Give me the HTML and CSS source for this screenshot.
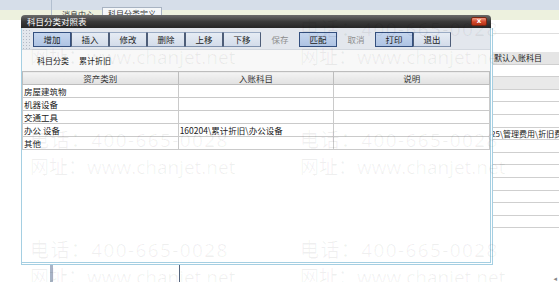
FILE: index.html
```html
<!DOCTYPE html>
<html lang="zh-CN">
<head>
  <meta charset="UTF-8" />
  <title>科目分类对照表</title>
  <link rel="stylesheet" href="styles.css">
</head>
<body>

<div class="app">
  <div class="app-head">
    <div class="head-left"></div>
    <div class="tabs">
      <span class="tab">消息中心</span>
      <span class="tab tab-on">科目分类定义</span>
    </div>
  </div>
  <div class="workspace">
    <div class="pane pane-a"></div>
    <div class="pane pane-b"></div>
    <div class="pane pane-c"></div>
    <div class="pane pane-d">
      <div class="d-top"></div>
      <div class="d-head">默认入账科目</div>
      <div class="d-row"></div>
      <div class="d-row sel"></div>
      <div class="d-row"></div>
      <div class="d-row"></div>
      <div class="d-row"></div>
      <div class="d-row">25\管理费用\折旧费</div>
      <div class="d-row"></div>
      <div class="d-row"></div>
      <div class="d-row"></div>
      <div class="d-row"></div>
      <div class="d-row"></div>
      <div class="d-row"></div>
      <div class="d-row"></div>
      <div class="d-arrow">◂</div>
    </div>
  </div>
</div>

<div class="dialog">
  <div class="dlg-title">
    <span>科目分类对照表</span>
    <span class="dlg-close">x</span>
  </div>
  <div class="dlg-body">
    <div class="toolbar">
      <span class="grip"></span>
      <button class="tb hl">增加</button>
      <button class="tb">插入</button>
      <button class="tb">修改</button>
      <button class="tb">删除</button>
      <button class="tb">上移</button>
      <button class="tb">下移</button>
      <button class="tb off">保存</button>
      <button class="tb hl">匹配</button>
      <button class="tb off">取消</button>
      <button class="tb hl">打印</button>
      <button class="tb">退出</button>
    </div>
    <div class="info">
      <span class="info-label">科目分类</span>
      <span class="info-value">累计折旧</span>
    </div>
    <table class="grid">
      <thead>
        <tr><th>资产类别</th><th>入账科目</th><th>说明</th></tr>
      </thead>
      <tbody>
        <tr><td>房屋建筑物</td><td></td><td></td></tr>
        <tr><td>机器设备</td><td></td><td></td></tr>
        <tr><td>交通工具</td><td></td><td></td></tr>
        <tr><td>办公 设备</td><td>160204\累计折旧\办公设备</td><td></td></tr>
        <tr><td>其他</td><td></td><td></td></tr>
      </tbody>
    </table>
  </div>
</div>

<!-- 水印 -->
<div class="wm wm-tel" style="left:300px;top:20px">电话：400-665-0028</div>
<div class="wm wm-url" style="left:30px;top:48px">网址：www.chanjet.net</div>
<div class="wm wm-url" style="left:300px;top:48px">网址：www.chanjet.net</div>
<div class="wm wm-tel" style="left:30px;top:131px">电话：400-665-0028</div>
<div class="wm wm-tel" style="left:300px;top:131px">电话：400-665-0028</div>
<div class="wm wm-url" style="left:30px;top:158px">网址：www.chanjet.net</div>
<div class="wm wm-url" style="left:300px;top:158px">网址：www.chanjet.net</div>
<div class="wm wm-tel" style="left:30px;top:241px">电话：400-665-0028</div>
<div class="wm wm-tel" style="left:300px;top:241px">电话：400-665-0028</div>
<div class="wm wm-url" style="left:30px;top:268px">网址：www.chanjet.net</div>
<div class="wm wm-url" style="left:300px;top:268px">网址：www.chanjet.net</div>

</body>
</html>
```

FILE: styles.css
```css
body {
  margin: 0;
  width: 559px;
  height: 282px;
  overflow: hidden;
  position: relative;
  background: #fff;
  font-family: "Noto Sans CJK SC", "DejaVu Sans", sans-serif;
  font-size: 8.5px;
  color: #222;
}
.app {
  height: 282px;
  display: flex;
  flex-direction: column;
}
.app-head {
  height: 20px;
  display: flex;
  background: linear-gradient(#d6dee9 0, #d6dee9 10px, #edf1de 10px);
}
.head-left {
  width: 51px;
  border-right: 1px solid #b2bfcf;
}
.tabs {
  display: flex;
  align-items: flex-end;
  gap: 8px;
  padding-left: 10px;
}
.tab {
  height: 10px;
  line-height: 10px;
  font-size: 8px;
  color: #3a3a3a;
}
.tab-on {
  height: 12px;
  line-height: 12px;
  padding: 0 5px;
  border: 1px solid #a8b3c2;
  border-bottom: none;
  background: #f5f7f9;
}
.workspace {
  flex: 1;
  display: flex;
}
.pane-a {
  width: 50px;
  border-right: 3px solid #a8b4c7;
}
.pane-b {
  width: 126px;
  border-right: 1px solid #56667e;
}
.pane-c {
  flex: 1;
}
.pane-d {
  width: 68px;
  display: flex;
  flex-direction: column;
}
.d-top {
  height: 13px;
  border-bottom: 1px solid #dedede;
  margin-bottom: 18px;
}
.d-head,
.d-row {
  height: 12.6px;
  box-sizing: border-box;
  border-bottom: 1px solid #cfcfcf;
  line-height: 12px;
  font-size: 8px;
  white-space: nowrap;
  overflow: hidden;
}
.d-head {
  background: #e5e5e5;
  padding-left: 3px;
}
.d-row.sel {
  background: #e9e9e9;
}
.d-arrow {
  margin-top: auto;
  align-self: flex-end;
  font-size: 7px;
  line-height: 8px;
  color: #888;
  padding-right: 2px;
}

/* 对话框 */
.dialog {
  position: absolute;
  left: 21px;
  top: 15px;
  width: 472px;
  z-index: 2;
}
.dlg-title {
  height: 13px;
  margin-right: 2px;
  border-radius: 4px 4px 0 0;
  background: linear-gradient(#6a6a6a, #3b3b3b 50%, #262626);
  display: flex;
  align-items: center;
  justify-content: space-between;
  padding: 0 4px 0 6px;
  color: #fff;
  font-size: 8.5px;
  line-height: 13px;
}
.dlg-close {
  width: 16px;
  height: 9px;
  box-sizing: border-box;
  border: 1px solid #7a2613;
  border-radius: 2px;
  background: linear-gradient(#f09a84, #d2462a 55%, #b83518);
  color: #fff;
  font-family: "DejaVu Sans", sans-serif;
  font-weight: bold;
  font-size: 7px;
  line-height: 6px;
  text-align: center;
}
.dlg-body {
  height: 237px;
  box-sizing: border-box;
  border-left: 1px solid #a5cfe2;
  border-right: 3px double #a5cfe2;
  border-bottom: 3px double #a5cfe2;
  background: #fff;
  display: flex;
  flex-direction: column;
}
.toolbar {
  height: 22px;
  box-sizing: border-box;
  background: #e3e7ed;
  border-bottom: 1px solid #d3d8df;
  display: flex;
  align-items: flex-start;
  padding-top: 4px;
}
.grip {
  width: 9px;
  height: 20px;
  margin-top: -3px;
  margin-right: 2px;
  background-image: radial-gradient(#b3bac6 0.8px, transparent 0.9px);
  background-size: 3px 3px;
}
.tb {
  width: 38px;
  height: 15px;
  box-sizing: border-box;
  padding: 0;
  font-family: inherit;
  font-size: 8.5px;
  line-height: 13px;
  color: #1c1c1c;
  border: 1px solid;
  border-color: #9aabc4 #4d5d78 #7f91ad #4d5d78;
  background: linear-gradient(#e6ecf4, #d3dcea);
}
.tb.hl {
  background: linear-gradient(#c5d6ee, #aec3e3);
  border-color: #34507f;
}
.tb.off {
  background: transparent;
  border-color: transparent;
  color: #8d8d8d;
}
.info {
  height: 21px;
  display: flex;
  align-items: center;
  padding-left: 15px;
  background: #f8f8f8;
  font-size: 8px;
}
.info-label {
  width: 42px;
}
.grid {
  width: 100%;
  border-collapse: collapse;
  table-layout: fixed;
}
.grid th,
.grid td {
  height: 12px;
  padding: 0 1px;
  font-size: 8.5px;
  line-height: 11px;
  white-space: nowrap;
  overflow: hidden;
}
.grid th {
  font-weight: normal;
  background: linear-gradient(#f4f4f4, #e1e1e1);
  border: 1px solid #bdbdbd;
  color: #333;
}
.grid td {
  border: 1px solid #cacaca;
  text-align: left;
}

/* 水印 */
.wm {
  position: absolute;
  z-index: 5;
  font-family: "Open Sans", "Noto Sans CJK SC", sans-serif;
  font-size: 19px;
  line-height: 19px;
  color: rgba(0, 0, 0, 0.06);
  white-space: nowrap;
  pointer-events: none;
}
.wm-tel {
  letter-spacing: 1.4px;
}
.wm-url {
  letter-spacing: 0;
}
```
